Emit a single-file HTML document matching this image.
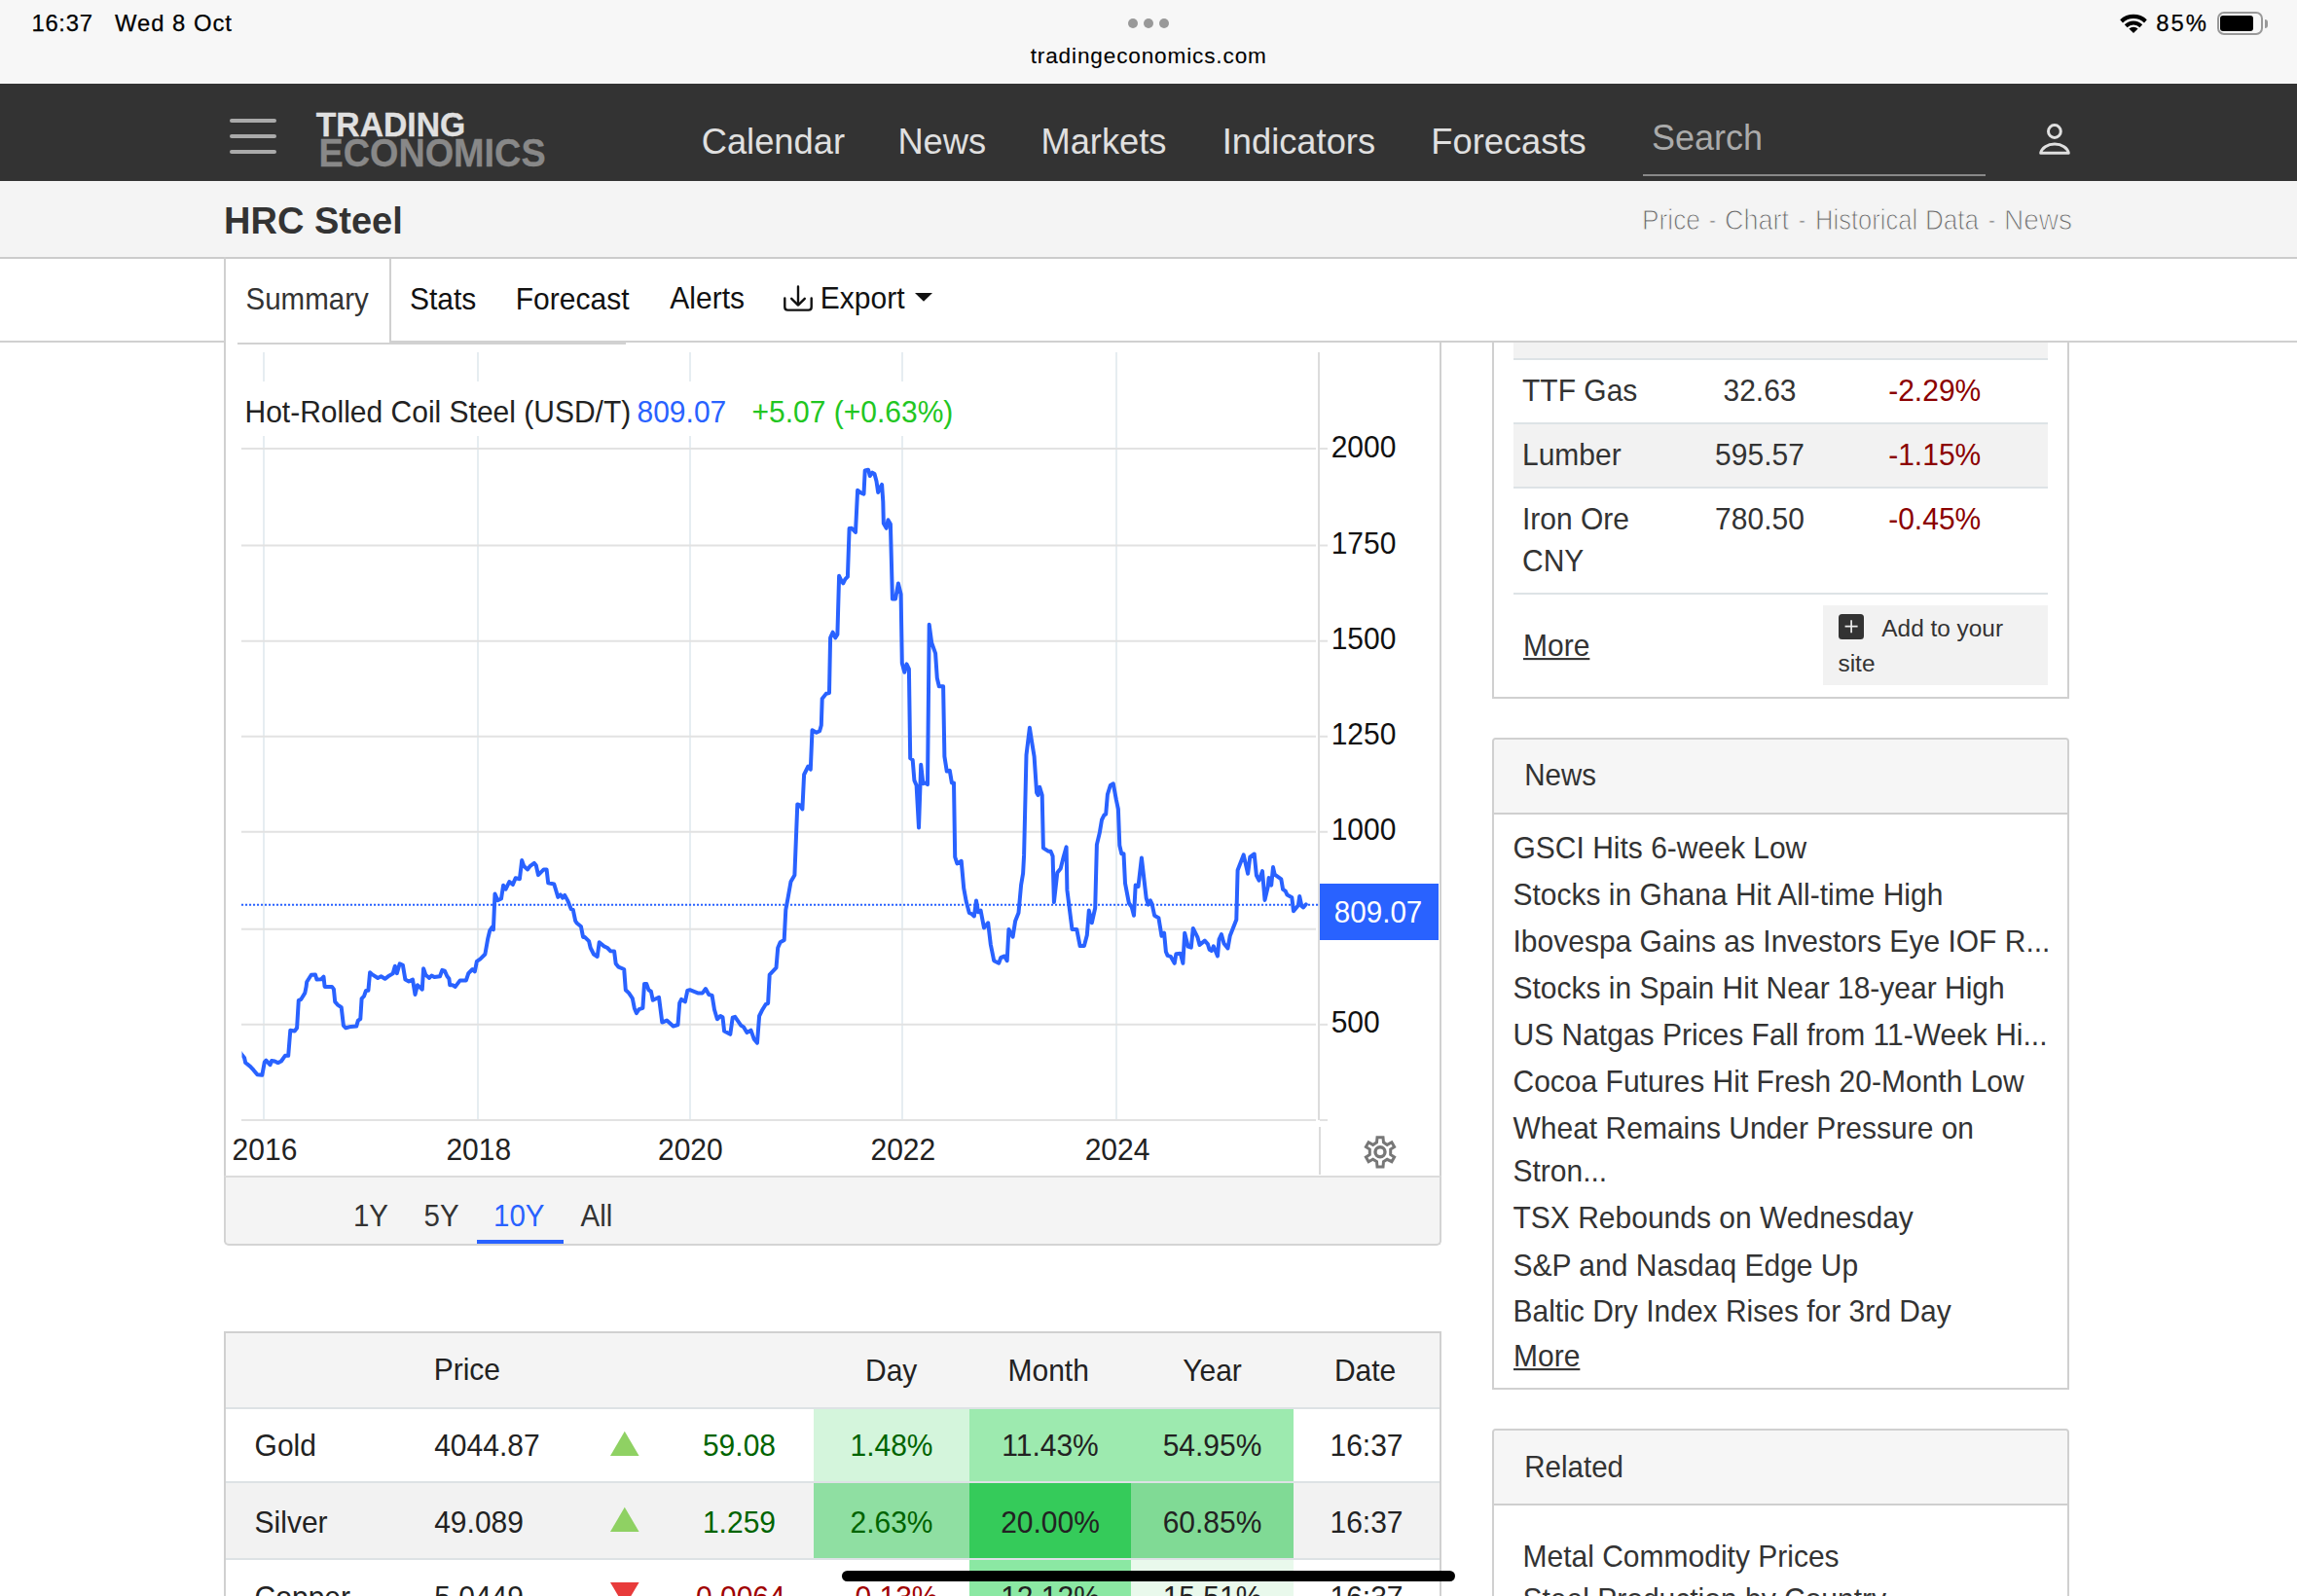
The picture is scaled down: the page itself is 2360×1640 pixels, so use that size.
<!DOCTYPE html>
<html><head><meta charset="utf-8"><title>HRC Steel</title>
<style>
html,body{margin:0;padding:0;}
body{width:2360px;height:1640px;overflow:hidden;position:relative;background:#fff;font-family:"Liberation Sans", sans-serif;}
.t{position:absolute;white-space:pre;font-family:"Liberation Sans", sans-serif;}
.r{position:absolute;}
.sy{transform:scaleY(1.04);transform-origin:0 85%;}
</style></head><body>
<div class="r" style="left:0px;top:0px;width:2360px;height:86px;background:#f7f7f7;"></div>
<div class="t" style="left:32.4px;top:11.9px;font-size:23.8px;line-height:23.8px;color:#000;-webkit-text-stroke:0.25px #000;letter-spacing:0.75px;">16:37</div>
<div class="t" style="left:118.0px;top:11.9px;font-size:23.8px;line-height:23.8px;color:#000;-webkit-text-stroke:0.25px #000;letter-spacing:1.0px;">Wed 8 Oct</div>
<div class="r" style="left:1159px;top:19px;width:10px;height:10px;border-radius:5px;background:#999"></div>
<div class="r" style="left:1175px;top:19px;width:10px;height:10px;border-radius:5px;background:#999"></div>
<div class="r" style="left:1191px;top:19px;width:10px;height:10px;border-radius:5px;background:#999"></div>
<div class="t" style="left:1058.7px;top:46.6px;font-size:22.6px;line-height:22.6px;color:#000;-webkit-text-stroke:0.1px #000;letter-spacing:0.85px;">tradingeconomics.com</div>
<div class="t" style="left:2215.3px;top:11.8px;font-size:23.8px;line-height:23.8px;color:#000;-webkit-text-stroke:0.25px #000;letter-spacing:2px;">85%</div>
<svg class="r" style="left:2176px;top:12px" width="32" height="24" viewBox="2176 12 32 24">
<path d="M2178.2 20.2 A20 20 0 0 1 2205.8 20.2 L2203 23.4 A16 16 0 0 0 2181 23.4 Z" fill="#000"/>
<path d="M2182.8 25.2 A13 13 0 0 1 2201.2 25.2 L2198.4 28.2 A9 9 0 0 0 2185.6 28.2 Z" fill="#000"/>
<path d="M2192 34 L2187.4 29.6 A6.5 6.5 0 0 1 2196.6 29.6 Z" fill="#000"/>
</svg>
<div class="r" style="left:2277.5px;top:12px;width:43px;height:20px;border:2px solid #999;border-radius:7px"></div>
<div class="r" style="left:2281px;top:16px;width:34px;height:16px;background:#000;border-radius:3px"></div>
<div class="r" style="left:2327px;top:19.5px;width:3px;height:9px;background:#999;border-radius:0 3px 3px 0"></div>
<div class="r" style="left:0px;top:86px;width:2360px;height:100px;background:#333333;"></div>
<div class="r" style="left:236px;top:122px;width:48px;height:4px;border-radius:2px;background:#aaa"></div>
<div class="r" style="left:236px;top:138px;width:48px;height:4px;border-radius:2px;background:#aaa"></div>
<div class="r" style="left:236px;top:154px;width:48px;height:4px;border-radius:2px;background:#aaa"></div>
<div class="t" style="left:324.8px;top:112.2px;font-size:33.7px;line-height:33.7px;color:#e0e0e0;font-weight:700;transform:scaleY(1.04);transform-origin:0 85%;-webkit-text-stroke:0.3px #e0e0e0;">TRADING</div>
<div class="t" style="left:327.5px;top:140.2px;font-size:37.8px;line-height:37.8px;color:#888;font-weight:700;transform:scaleY(1.07);transform-origin:0 85%;-webkit-text-stroke:0.3px #888;">ECONOMICS</div>
<div class="t" style="left:720.7px;top:128.1px;font-size:36.3px;line-height:36.3px;color:#e0e0e0;">Calendar</div>
<div class="t" style="left:922.4px;top:128.1px;font-size:36.3px;line-height:36.3px;color:#e0e0e0;">News</div>
<div class="t" style="left:1069.4px;top:128.1px;font-size:36.3px;line-height:36.3px;color:#e0e0e0;">Markets</div>
<div class="t" style="left:1255.7px;top:128.1px;font-size:36.3px;line-height:36.3px;color:#e0e0e0;">Indicators</div>
<div class="t" style="left:1470.3px;top:128.1px;font-size:36.3px;line-height:36.3px;color:#e0e0e0;">Forecasts</div>
<div class="t" style="left:1697.0px;top:124.0px;font-size:36px;line-height:36px;color:#aaa;">Search</div>
<div class="r" style="left:1688px;top:178.5px;width:352px;height:2px;background:#888;"></div>
<svg class="r" style="left:2090px;top:122px" width="42" height="42" viewBox="2090 122 42 42">
<circle cx="2110.9" cy="135" r="6.4" fill="none" stroke="#e0e0e0" stroke-width="3"/>
<path d="M2096.7 157.3 A14.4 10.5 0 0 1 2125.3 157.3 Z" fill="none" stroke="#e0e0e0" stroke-width="3" stroke-linejoin="round"/>
</svg>
<div class="r" style="left:0px;top:186px;width:2360px;height:78px;background:#f4f4f4;"></div>
<div class="r" style="left:0px;top:264px;width:2360px;height:2px;background:#cccccc;"></div>
<div class="t" style="left:230.1px;top:207.7px;font-size:38px;line-height:38px;color:#333;font-weight:700;">HRC Steel</div>
<div class="t" style="left:1686.5px;top:211.3px;font-size:30px;line-height:30px;color:#6a6a6a;-webkit-text-stroke:1px #f4f4f4;transform:scaleX(0.877);transform-origin:0 0;">Price</div>
<div class="t" style="left:1756.2px;top:211.3px;font-size:30px;line-height:30px;color:#6a6a6a;-webkit-text-stroke:1px #f4f4f4;transform:scaleX(0.7);transform-origin:0 0;">-</div>
<div class="t" style="left:1771.8px;top:211.3px;font-size:30px;line-height:30px;color:#6a6a6a;-webkit-text-stroke:1px #f4f4f4;transform:scaleX(0.899);transform-origin:0 0;">Chart</div>
<div class="t" style="left:1847.6px;top:211.3px;font-size:30px;line-height:30px;color:#6a6a6a;-webkit-text-stroke:1px #f4f4f4;transform:scaleX(0.7);transform-origin:0 0;">-</div>
<div class="t" style="left:1864.6px;top:211.3px;font-size:30px;line-height:30px;color:#6a6a6a;-webkit-text-stroke:1px #f4f4f4;transform:scaleX(0.852);transform-origin:0 0;">Historical</div>
<div class="t" style="left:1977.7px;top:211.3px;font-size:30px;line-height:30px;color:#6a6a6a;-webkit-text-stroke:1px #f4f4f4;transform:scaleX(0.869);transform-origin:0 0;">Data</div>
<div class="t" style="left:2043.1px;top:211.3px;font-size:30px;line-height:30px;color:#6a6a6a;-webkit-text-stroke:1px #f4f4f4;transform:scaleX(0.7);transform-origin:0 0;">-</div>
<div class="t" style="left:2059.4px;top:211.3px;font-size:30px;line-height:30px;color:#6a6a6a;-webkit-text-stroke:1px #f4f4f4;transform:scaleX(0.935);transform-origin:0 0;">News</div>
<div class="r" style="left:0px;top:266px;width:2360px;height:84px;background:#ffffff;"></div>
<div class="r" style="left:0px;top:350px;width:2360px;height:2px;background:#d0d0d0;"></div>
<div class="r" style="left:230px;top:264px;width:2px;height:88px;background:#d0d0d0;"></div>
<div class="r" style="left:400px;top:266px;width:2px;height:86px;background:#d0d0d0;"></div>
<div class="r" style="left:232px;top:350px;width:168px;height:2px;background:#ffffff;"></div>
<div class="r" style="left:244px;top:352px;width:399px;height:2px;background:#d2d2d2;"></div>
<div class="t sy" style="left:252.5px;top:292.9px;font-size:29.5px;line-height:29.5px;color:#333;">Summary</div>
<div class="t sy" style="left:421.0px;top:292.5px;font-size:30px;line-height:30px;color:#111;">Stats</div>
<div class="t sy" style="left:529.8px;top:292.5px;font-size:30px;line-height:30px;color:#111;">Forecast</div>
<div class="t sy" style="left:688.3px;top:292.3px;font-size:30px;line-height:30px;color:#111;">Alerts</div>
<div class="t sy" style="left:842.8px;top:292.3px;font-size:30px;line-height:30px;color:#111;">Export</div>
<svg class="r" style="left:800px;top:290px" width="40" height="34" viewBox="800 290 40 34">
<path d="M820 294.5 V313.5 M813.2 306.8 L820 313.6 L826.8 306.8" fill="none" stroke="#111" stroke-width="2.4" stroke-linecap="round" stroke-linejoin="round"/>
<path d="M806.3 306.5 V315.5 Q806.3 318.6 809.4 318.6 H830.6 Q833.7 318.6 833.7 315.5 V306.5" fill="none" stroke="#111" stroke-width="2.4" stroke-linecap="round"/>
</svg>
<svg class="r" style="left:938px;top:299px" width="22" height="13" viewBox="938 299 22 13"><path d="M940 301 H958 L949 309.8 Z" fill="#111"/></svg>
<div class="r" style="left:230px;top:352px;width:2px;height:924px;background:#d0d0d0;"></div>
<div class="r" style="left:1479px;top:352px;width:2px;height:924px;background:#d0d0d0;"></div>
<div class="r" style="left:230px;top:1208px;width:1251px;height:72px;background:#f4f4f4;border:2px solid #d4d4d4;border-top:2px solid #dcdcdc;box-sizing:border-box;border-radius:0 0 5px 5px"></div>
<svg class="r" style="left:232px;top:352px" width="1247" height="855" viewBox="232 352 1247 855">
<line x1="271" y1="362" x2="271" y2="1151" stroke="#e6edf1" stroke-width="2"/>
<line x1="491" y1="362" x2="491" y2="1151" stroke="#e6edf1" stroke-width="2"/>
<line x1="709" y1="362" x2="709" y2="1151" stroke="#e6edf1" stroke-width="2"/>
<line x1="927" y1="362" x2="927" y2="1151" stroke="#e6edf1" stroke-width="2"/>
<line x1="1147" y1="362" x2="1147" y2="1151" stroke="#e6edf1" stroke-width="2"/>
<line x1="248" y1="461" x2="1352" y2="461" stroke="#e2e2e2" stroke-width="2"/>
<line x1="1356" y1="461" x2="1364" y2="461" stroke="#e2e2e2" stroke-width="2"/>
<line x1="248" y1="560.5" x2="1352" y2="560.5" stroke="#e2e2e2" stroke-width="2"/>
<line x1="1356" y1="560.5" x2="1364" y2="560.5" stroke="#e2e2e2" stroke-width="2"/>
<line x1="248" y1="658.7" x2="1352" y2="658.7" stroke="#e2e2e2" stroke-width="2"/>
<line x1="1356" y1="658.7" x2="1364" y2="658.7" stroke="#e2e2e2" stroke-width="2"/>
<line x1="248" y1="756.8" x2="1352" y2="756.8" stroke="#e2e2e2" stroke-width="2"/>
<line x1="1356" y1="756.8" x2="1364" y2="756.8" stroke="#e2e2e2" stroke-width="2"/>
<line x1="248" y1="854.8" x2="1352" y2="854.8" stroke="#e2e2e2" stroke-width="2"/>
<line x1="1356" y1="854.8" x2="1364" y2="854.8" stroke="#e2e2e2" stroke-width="2"/>
<line x1="248" y1="954.8" x2="1352" y2="954.8" stroke="#e2e2e2" stroke-width="2"/>
<line x1="1356" y1="954.8" x2="1364" y2="954.8" stroke="#e2e2e2" stroke-width="2"/>
<line x1="248" y1="1052.8" x2="1352" y2="1052.8" stroke="#e2e2e2" stroke-width="2"/>
<line x1="1356" y1="1052.8" x2="1364" y2="1052.8" stroke="#e2e2e2" stroke-width="2"/>
<line x1="248" y1="1151" x2="1352" y2="1151" stroke="#e2e2e2" stroke-width="2"/>
<line x1="1356" y1="1151" x2="1364" y2="1151" stroke="#e2e2e2" stroke-width="2"/>
<line x1="1355" y1="362" x2="1355" y2="1151" stroke="#dcdcdc" stroke-width="2"/>
<line x1="1356" y1="1158" x2="1356" y2="1208" stroke="#dcdcdc" stroke-width="2"/>
<rect x="240" y="392" width="760" height="56" fill="#fff"/>
<line x1="248" y1="929.7" x2="1355" y2="929.7" stroke="#2962ff" stroke-width="2" stroke-dasharray="2.1 1.9"/>
<defs><clipPath id="pc"><rect x="248.5" y="360" width="1110" height="790"/></clipPath></defs>
<path d="M246 1080.5 L248.5 1083.8 L251.1 1087.0 L252.2 1092.0 L257.1 1095.8 L260.4 1099.4 L264.4 1104.3 L269.3 1104.8 L271.8 1091.3 L273.4 1089.6 L277.5 1094.2 L279.1 1090.0 L282.3 1090.5 L285.6 1092.1 L288.9 1090.5 L292.9 1084.8 L296.2 1084.8 L298.3 1058.7 L302.7 1059.5 L305.1 1056.3 L306.8 1027.8 L309.2 1027.0 L313.3 1020.4 L314.6 1013.9 L315.2 1009.0 L319.8 1001.7 L323.9 1001.4 L325.5 1006.6 L329.9 1006.3 L332.5 1003.6 L333.6 1013.9 L341.0 1013.9 L342.9 1016.4 L344.2 1029.4 L346.7 1032.3 L350.7 1035.1 L352.9 1053.8 L355.3 1056.3 L360.5 1054.9 L366.2 1054.6 L367.9 1048.6 L370.3 1047.0 L371.6 1026.1 L374.0 1023.7 L376.0 1018.0 L378.4 1017.7 L380.1 999.2 L382.5 1001.4 L388.2 1005.0 L391.5 1003.3 L395.5 1005.8 L398.8 1003.3 L403.7 1000.4 L405.8 992.7 L407.8 1000.1 L410.7 990.3 L413.9 991.9 L416.4 1006.6 L420.0 1008.5 L424.0 1006.6 L426.5 1022.0 L428.9 1012.3 L433.8 1016.7 L435.1 995.2 L437.3 1001.7 L441.1 1005.0 L443.4 1002.5 L446.3 1004.1 L452.0 1003.3 L454.4 996.8 L456.9 997.6 L459.3 1003.0 L461.4 1005.8 L462.2 1012.3 L465.0 1012.3 L467.8 1013.9 L472.7 1007.4 L478.9 1007.4 L481.3 1000.1 L485.4 996.0 L487.8 998.4 L489.9 987.8 L493.5 985.4 L498.4 980.5 L501.3 964.2 L503.3 956.1 L505.7 952.5 L506.9 955.3 L508.5 918.6 L511.4 925.1 L515.0 923.5 L517.1 909.7 L519.6 913.7 L523.3 906.1 L526.9 908.9 L529.7 902.3 L533.9 903.2 L536.2 884.1 L538.3 890.1 L542.1 893.4 L544.8 889.8 L548.9 886.9 L550.8 889.3 L553.0 899.1 L558.7 893.4 L561.6 893.4 L563.2 907.2 L569.3 908.5 L573.3 921.9 L575.8 919.4 L578.2 922.7 L580.2 919.9 L583.1 925.1 L586.7 934.1 L588.8 934.9 L591.2 946.3 L592.9 948.8 L596.9 952.0 L599.1 962.9 L601.0 963.1 L605.1 967.2 L606.7 974.0 L610.0 980.5 L613.7 983.0 L615.7 968.3 L620.6 972.4 L624.1 974.0 L627.3 977.3 L631.1 977.6 L632.7 990.3 L635.5 993.6 L641.2 996.0 L642.8 1017.2 L646.1 1020.4 L649.8 1025.8 L651.8 1035.9 L653.9 1041.1 L656.6 1037.2 L660.4 1035.9 L662.0 1011.1 L664.3 1011.1 L666.4 1017.2 L668.9 1018.8 L670.8 1027.8 L677.0 1024.8 L680.3 1050.6 L685.1 1048.6 L691.7 1054.6 L696.5 1053.0 L698.2 1030.7 L700.1 1026.9 L703.9 1029.4 L706.3 1018.0 L708.8 1017.2 L716.9 1020.4 L721.8 1020.4 L725.0 1016.0 L728.3 1022.0 L731.6 1022.9 L734.0 1037.5 L736.9 1047.3 L740.2 1044.0 L742.5 1045.3 L744.1 1059.5 L750.3 1062.8 L752.7 1045.7 L755.2 1044.9 L761.4 1053.8 L764.1 1055.4 L767.4 1061.1 L771.5 1058.7 L774.7 1067.7 L778.0 1071.7 L780.1 1044.0 L782.9 1038.3 L786.9 1031.8 L789.1 1031.0 L790.7 1001.7 L797.5 994.4 L799.2 974.0 L801.6 968.3 L805.7 965.9 L807.3 934.9 L809.7 921.9 L812.5 906.0 L816.4 899.2 L819.3 826.4 L821.8 827.3 L824.4 831.5 L826.1 796.0 L830.3 787.5 L832.8 790.6 L834.5 750.3 L838.8 752.8 L842.1 751.2 L843.8 745.2 L844.7 717.9 L848.9 712.8 L852.0 712.0 L853.1 655.3 L855.7 649.7 L858.2 655.3 L860.4 651.9 L862.1 591.8 L864.1 596.1 L866.3 599.4 L868.4 595.2 L870.9 592.7 L872.6 543.1 L875.1 542.8 L879.0 547.0 L881.1 503.8 L884.4 506.4 L887.5 507.6 L888.7 483.5 L892.1 482.7 L893.8 489.0 L896.3 485.6 L898.5 486.9 L900.5 494.5 L902.2 505.9 L904.2 501.3 L906.1 497.9 L907.3 515.7 L907.8 537.7 L910.7 542.8 L912.4 534.3 L914.9 538.5 L916.9 615.5 L920.0 615.5 L922.9 599.4 L925.6 610.4 L926.8 681.5 L929.3 690.8 L931.5 682.4 L933.9 687.4 L935.2 779.1 L937.7 780.8 L939.4 801.9 L941.6 807.0 L944.0 850.5 L946.2 785.8 L948.4 805.3 L950.4 804.4 L953.0 806.1 L954.7 641.7 L957.2 660.4 L961.1 671.4 L962.8 696.7 L964.8 705.2 L969.1 705.2 L970.4 777.4 L972.8 792.6 L975.8 791.8 L977.9 804.4 L980.0 804.4 L981.2 880.6 L983.4 887.4 L987.7 884.8 L990.2 912.7 L992.7 926.3 L995.8 938.1 L998.2 939.0 L1000.9 941.5 L1003.0 925.4 L1005.1 937.3 L1007.6 935.6 L1011.0 953.4 L1015.2 948.3 L1017.8 970.3 L1021.2 987.2 L1026.2 989.7 L1028.4 983.8 L1032.1 982.5 L1034.7 987.2 L1036.4 955.0 L1040.6 962.7 L1043.1 946.6 L1046.5 938.1 L1049.1 909.4 L1051.1 897.5 L1052.1 878.9 L1054.5 775.7 L1057.9 747.8 L1060.1 762.1 L1062.6 777.4 L1065.1 814.6 L1066.5 817.1 L1068.2 808.7 L1070.7 817.1 L1071.9 871.3 L1077.0 874.7 L1079.5 874.7 L1081.6 879.7 L1082.9 927.1 L1086.3 896.7 L1089.7 892.4 L1092.7 880.6 L1095.6 870.4 L1096.4 914.4 L1101.5 955.0 L1106.3 955.0 L1109.6 972.0 L1113.9 972.0 L1116.8 961.0 L1118.8 935.6 L1121.8 948.3 L1125.2 933.0 L1126.9 867.9 L1129.9 855.2 L1132.0 842.5 L1134.5 837.4 L1136.2 836.6 L1137.9 816.3 L1140.8 807.0 L1143.8 805.3 L1146.9 822.2 L1148.9 831.5 L1150.3 868.7 L1152.3 877.2 L1154.5 877.2 L1156.0 907.7 L1159.9 928.0 L1162.8 932.2 L1165.0 940.7 L1166.7 909.4 L1169.5 911.0 L1172.9 881.4 L1177.7 922.9 L1179.7 929.7 L1181.9 925.4 L1183.6 928.8 L1186.1 940.7 L1190.4 943.2 L1193.5 961.8 L1196.1 958.7 L1197.9 978.0 L1199.6 981.9 L1202.7 982.8 L1206.7 989.8 L1208.4 980.2 L1212.8 979.7 L1215.4 989.8 L1217.2 958.7 L1220.7 972.7 L1223.8 973.6 L1225.8 953.9 L1230.4 963.1 L1232.5 971.0 L1237.8 966.6 L1240.9 970.1 L1242.6 975.8 L1244.8 977.1 L1246.8 972.3 L1251.0 982.4 L1252.5 965.3 L1254.9 960.0 L1257.5 969.6 L1261.5 974.5 L1263.7 961.8 L1270.3 945.1 L1271.6 894.2 L1277.7 878.4 L1282.1 897.7 L1284.3 880.6 L1288.7 877.5 L1290.9 899.5 L1293.5 904.7 L1297.0 895.1 L1299.5 924.9 L1302.7 911.3 L1303.6 902.1 L1306.2 909.6 L1308.0 891.1 L1309.7 898.6 L1316.3 903.4 L1318.1 913.9 L1320.7 915.7 L1322.5 919.6 L1327.3 922.3 L1329.0 936.3 L1333.9 930.2 L1335.2 921.0 L1337.4 931.1 L1339.1 932.4 L1341.8 929.3" fill="none" stroke="#2962ff" stroke-width="4" stroke-linejoin="round" stroke-linecap="round" clip-path="url(#pc)"/>
<rect x="1356" y="908" width="122" height="58" fill="#2962ff"/>
<path d="M1415.0 1168.7 L1421.0 1168.7 L1421.5 1173.8 L1425.2 1176.4 L1429.9 1173.8 L1432.6 1178.6 L1428.7 1181.0 L1428.7 1186.5 L1432.6 1188.9 L1429.9 1193.7 L1425.2 1191.3 L1421.5 1193.7 L1421.0 1199.1 L1415.0 1199.1 L1414.5 1193.7 L1410.6 1191.3 L1406.1 1193.7 L1403.4 1188.9 L1407.3 1186.5 L1407.3 1181.0 L1403.4 1178.6 L1406.1 1173.8 L1410.6 1176.4 L1414.5 1173.8 Z" fill="none" stroke="#777" stroke-width="3" stroke-linejoin="miter"/>
<circle cx="1418" cy="1183.75" r="5" fill="none" stroke="#777" stroke-width="3.4"/>
</svg>
<div class="t sy" style="left:251.5px;top:408.8px;font-size:30px;line-height:30px;color:#222;">Hot-Rolled Coil Steel (USD/T)</div>
<div class="t sy" style="left:654.5px;top:408.8px;font-size:30px;line-height:30px;color:#2962ff;">809.07</div>
<div class="t sy" style="left:772.5px;top:408.8px;font-size:30px;line-height:30px;color:#22c622;">+5.07 (+0.63%)</div>
<div class="t sy" style="left:1367.7px;top:444.5px;font-size:30px;line-height:30px;color:#111;">2000</div>
<div class="t sy" style="left:1367.7px;top:544.0px;font-size:30px;line-height:30px;color:#111;">1750</div>
<div class="t sy" style="left:1367.7px;top:642.2px;font-size:30px;line-height:30px;color:#111;">1500</div>
<div class="t sy" style="left:1367.7px;top:740.3px;font-size:30px;line-height:30px;color:#111;">1250</div>
<div class="t sy" style="left:1367.7px;top:838.3px;font-size:30px;line-height:30px;color:#111;">1000</div>
<div class="t sy" style="left:1367.7px;top:1036.3px;font-size:30px;line-height:30px;color:#111;">500</div>
<div class="t sy" style="left:1370.8px;top:922.6px;font-size:29.6px;line-height:29.6px;color:#ffffff;">809.07</div>
<div class="t sy" style="left:238.6px;top:1166.5px;font-size:30px;line-height:30px;color:#222;">2016</div>
<div class="t sy" style="left:458.4px;top:1166.5px;font-size:30px;line-height:30px;color:#222;">2018</div>
<div class="t sy" style="left:676.0px;top:1166.5px;font-size:30px;line-height:30px;color:#222;">2020</div>
<div class="t sy" style="left:894.5px;top:1166.5px;font-size:30px;line-height:30px;color:#222;">2022</div>
<div class="t sy" style="left:1114.7px;top:1166.5px;font-size:30px;line-height:30px;color:#222;">2024</div>
<div class="t sy" style="left:362.9px;top:1234.6px;font-size:29.5px;line-height:29.5px;color:#333;">1Y</div>
<div class="t sy" style="left:435.5px;top:1234.6px;font-size:29.5px;line-height:29.5px;color:#333;">5Y</div>
<div class="t sy" style="left:507.0px;top:1234.6px;font-size:29.5px;line-height:29.5px;color:#2962ff;">10Y</div>
<div class="t sy" style="left:596.5px;top:1234.6px;font-size:29.5px;line-height:29.5px;color:#333;">All</div>
<div class="r" style="left:490px;top:1274px;width:89px;height:4px;background:#2962ff;"></div>
<div class="r" style="left:230px;top:1368px;width:1251px;height:300px;border:2px solid #d0d0d0;border-bottom:none;box-sizing:border-box"></div>
<div class="r" style="left:232px;top:1370px;width:1247px;height:76px;background:#f4f4f4;"></div>
<div class="r" style="left:232px;top:1446px;width:1247px;height:2px;background:#dde2e5;"></div>
<div class="r" style="left:232px;top:1524px;width:1247px;height:78px;background:#f2f2f2;"></div>
<div class="r" style="left:232px;top:1522px;width:1247px;height:2px;background:#dde2e5;"></div>
<div class="r" style="left:232px;top:1601px;width:1247px;height:2px;background:#dde2e5;"></div>
<div class="r" style="left:836px;top:1448px;width:160px;height:74px;background:#d4f5dc;"></div>
<div class="r" style="left:996px;top:1448px;width:166px;height:74px;background:#9deaaf;"></div>
<div class="r" style="left:1162px;top:1448px;width:167px;height:74px;background:#9deaaf;"></div>
<div class="r" style="left:836px;top:1524px;width:160px;height:77px;background:#8fdfa2;"></div>
<div class="r" style="left:996px;top:1524px;width:166px;height:77px;background:#35cb5a;"></div>
<div class="r" style="left:1162px;top:1524px;width:167px;height:77px;background:#80da95;"></div>
<div class="r" style="left:996px;top:1603px;width:166px;height:40px;background:#8be8a3;"></div>
<div class="r" style="left:1162px;top:1603px;width:167px;height:40px;background:#e9f9ec;"></div>
<div class="t sy" style="left:445.7px;top:1393.3px;font-size:30px;line-height:30px;color:#222;">Price</div>
<div class="t sy" style="left:889.0px;top:1393.7px;font-size:30px;line-height:30px;color:#222;">Day</div>
<div class="t sy" style="left:1035.5px;top:1393.7px;font-size:30px;line-height:30px;color:#222;">Month</div>
<div class="t sy" style="left:1215.2px;top:1393.7px;font-size:30px;line-height:30px;color:#222;">Year</div>
<div class="t sy" style="left:1370.9px;top:1393.7px;font-size:30px;line-height:30px;color:#222;">Date</div>
<div class="t sy" style="left:261.6px;top:1471.3px;font-size:30px;line-height:30px;color:#222;">Gold</div>
<div class="t sy" style="left:446.2px;top:1471.3px;font-size:30px;line-height:30px;color:#222;">4044.87</div>
<svg class="r" style="left:626px;top:1469.8px" width="32" height="27" viewBox="0 0 32 27"><path d="M1 26 L15.8 0.7 L30.6 26 Z" fill="#8fd163"/></svg>
<div class="t sy" style="left:640px;top:1471.3px;width:157px;text-align:right;font-size:30px;line-height:30px;color:#006400">59.08</div>
<div class="t sy" style="left:836px;top:1471.3px;width:160px;text-align:center;font-size:30px;line-height:30px;color:#006400">1.48%</div>
<div class="t sy" style="left:996px;top:1471.3px;width:166px;text-align:center;font-size:30px;line-height:30px;color:#222">11.43%</div>
<div class="t sy" style="left:1162px;top:1471.3px;width:167px;text-align:center;font-size:30px;line-height:30px;color:#222">54.95%</div>
<div class="t sy" style="left:1329px;top:1471.3px;width:150px;text-align:center;font-size:30px;line-height:30px;color:#222">16:37</div>
<div class="t sy" style="left:261.6px;top:1549.5px;font-size:30px;line-height:30px;color:#222;">Silver</div>
<div class="t sy" style="left:446.2px;top:1549.5px;font-size:30px;line-height:30px;color:#222;">49.089</div>
<svg class="r" style="left:626px;top:1548px" width="32" height="27" viewBox="0 0 32 27"><path d="M1 26 L15.8 0.7 L30.6 26 Z" fill="#8fd163"/></svg>
<div class="t sy" style="left:640px;top:1549.5px;width:157px;text-align:right;font-size:30px;line-height:30px;color:#006400">1.259</div>
<div class="t sy" style="left:836px;top:1549.5px;width:160px;text-align:center;font-size:30px;line-height:30px;color:#006400">2.63%</div>
<div class="t sy" style="left:996px;top:1549.5px;width:166px;text-align:center;font-size:30px;line-height:30px;color:#222">20.00%</div>
<div class="t sy" style="left:1162px;top:1549.5px;width:167px;text-align:center;font-size:30px;line-height:30px;color:#222">60.85%</div>
<div class="t sy" style="left:1329px;top:1549.5px;width:150px;text-align:center;font-size:30px;line-height:30px;color:#222">16:37</div>
<div class="t sy" style="left:261.6px;top:1626.5px;font-size:30px;line-height:30px;color:#222;">Copper</div>
<div class="t sy" style="left:446.2px;top:1626.5px;font-size:30px;line-height:30px;color:#222;">5.0449</div>
<svg class="r" style="left:626px;top:1625.4px" width="32" height="27" viewBox="0 0 32 27"><path d="M1 1 L15.8 26 L30.6 1 Z" fill="#e83b3b"/></svg>
<div class="t sy" style="left:640px;top:1626.5px;width:166.7px;text-align:right;font-size:30px;line-height:30px;color:#a00000">-0.0064</div>
<div class="t sy" style="left:836px;top:1626.5px;width:160px;text-align:center;font-size:30px;line-height:30px;color:#a00000">-0.13%</div>
<div class="t sy" style="left:996px;top:1626.5px;width:166px;text-align:center;font-size:30px;line-height:30px;color:#222">12.12%</div>
<div class="t sy" style="left:1162px;top:1626.5px;width:167px;text-align:center;font-size:30px;line-height:30px;color:#222">15.51%</div>
<div class="t sy" style="left:1329px;top:1626.5px;width:150px;text-align:center;font-size:30px;line-height:30px;color:#222">16:37</div>
<div class="r" style="left:865px;top:1613.5px;width:630px;height:11.5px;border-radius:6px;background:#000"></div>
<div class="r" style="left:1533px;top:352px;width:593px;height:366px;border:2px solid #d0d0d0;border-top:none;box-sizing:border-box"></div>
<div class="r" style="left:1555px;top:352px;width:549px;height:16px;background:#f2f2f2;"></div>
<div class="r" style="left:1555px;top:368px;width:549px;height:2px;background:#dde3e6;"></div>
<div class="r" style="left:1555px;top:434px;width:549px;height:2px;background:#dde3e6;"></div>
<div class="r" style="left:1555px;top:436px;width:549px;height:64px;background:#f2f2f2;"></div>
<div class="r" style="left:1555px;top:500px;width:549px;height:2px;background:#dde3e6;"></div>
<div class="r" style="left:1555px;top:609px;width:549px;height:2px;background:#dde3e6;"></div>
<div class="t sy" style="left:1564.0px;top:386.8px;font-size:30px;line-height:30px;color:#333;">TTF Gas</div>
<div class="t sy" style="left:1700px;top:386.8px;width:216px;text-align:center;font-size:30px;line-height:30px;color:#333">32.63</div>
<div class="t sy" style="left:1940.2px;top:386.8px;font-size:30px;line-height:30px;color:#8b0000;">-2.29%</div>
<div class="t sy" style="left:1564.0px;top:453.0px;font-size:30px;line-height:30px;color:#333;">Lumber</div>
<div class="t sy" style="left:1700px;top:453.0px;width:216px;text-align:center;font-size:30px;line-height:30px;color:#333">595.57</div>
<div class="t sy" style="left:1940.2px;top:453.0px;font-size:30px;line-height:30px;color:#8b0000;">-1.15%</div>
<div class="t sy" style="left:1564.0px;top:519.1px;font-size:30px;line-height:30px;color:#333;">Iron Ore</div>
<div class="t sy" style="left:1700px;top:519.1px;width:216px;text-align:center;font-size:30px;line-height:30px;color:#333">780.50</div>
<div class="t sy" style="left:1940.2px;top:519.1px;font-size:30px;line-height:30px;color:#8b0000;">-0.45%</div>
<div class="t sy" style="left:1564.0px;top:562.3px;font-size:30px;line-height:30px;color:#333;">CNY</div>
<div class="t sy" style="left:1565.0px;top:649.0px;font-size:30px;line-height:30px;color:#333;text-decoration:underline;text-underline-offset:2px;text-decoration-thickness:2px;">More</div>
<div class="r" style="left:1873px;top:622px;width:231px;height:82px;background:#f2f2f2;"></div>
<div class="r" style="left:1889px;top:631px;width:26px;height:26px;border-radius:3.5px;background:#333"></div>
<svg class="r" style="left:1889px;top:631px" width="26" height="26" viewBox="0 0 26 26"><path d="M13.1 6.2 V19.2 M6.6 12.7 H19.6" stroke="#eee" stroke-width="1.7"/></svg>
<div class="t" style="left:1933.3px;top:633.7px;font-size:24.4px;line-height:24.4px;color:#333;">Add to your</div>
<div class="t" style="left:1888.5px;top:670.3px;font-size:24.4px;line-height:24.4px;color:#333;">site</div>
<div class="r" style="left:1533px;top:758px;width:593px;height:670px;border:2px solid #d0d0d0;box-sizing:border-box;border-radius:4px 4px 0 0"></div>
<div class="r" style="left:1535px;top:760px;width:589px;height:76px;background:#f6f6f6;border-radius:3px 3px 0 0"></div>
<div class="r" style="left:1535px;top:835px;width:589px;height:2px;background:#cfcfcf;"></div>
<div class="t sy" style="left:1566.3px;top:782.4px;font-size:29.5px;line-height:29.5px;color:#333;">News</div>
<div class="t sy" style="left:1554.5px;top:857.2px;font-size:30px;line-height:30px;color:#333;">GSCI Hits 6-week Low</div>
<div class="t sy" style="left:1554.5px;top:905.2px;font-size:30px;line-height:30px;color:#333;">Stocks in Ghana Hit All-time High</div>
<div class="t sy" style="left:1554.5px;top:953.0px;font-size:30px;line-height:30px;color:#333;">Ibovespa Gains as Investors Eye IOF R...</div>
<div class="t sy" style="left:1554.5px;top:1001.1px;font-size:30px;line-height:30px;color:#333;">Stocks in Spain Hit Near 18-year High</div>
<div class="t sy" style="left:1554.5px;top:1048.8px;font-size:30px;line-height:30px;color:#333;">US Natgas Prices Fall from 11-Week Hi...</div>
<div class="t sy" style="left:1554.5px;top:1097.3px;font-size:30px;line-height:30px;color:#333;">Cocoa Futures Hit Fresh 20-Month Low</div>
<div class="t sy" style="left:1554.5px;top:1145.1px;font-size:30px;line-height:30px;color:#333;">Wheat Remains Under Pressure on</div>
<div class="t sy" style="left:1554.5px;top:1189.1px;font-size:30px;line-height:30px;color:#333;">Stron...</div>
<div class="t sy" style="left:1554.5px;top:1236.9px;font-size:30px;line-height:30px;color:#333;">TSX Rebounds on Wednesday</div>
<div class="t sy" style="left:1554.5px;top:1285.5px;font-size:30px;line-height:30px;color:#333;">S&amp;P and Nasdaq Edge Up</div>
<div class="t sy" style="left:1554.5px;top:1333.2px;font-size:30px;line-height:30px;color:#333;">Baltic Dry Index Rises for 3rd Day</div>
<div class="t sy" style="left:1555.0px;top:1379.1px;font-size:30px;line-height:30px;color:#333;text-decoration:underline;text-underline-offset:2px;text-decoration-thickness:2px;">More</div>
<div class="r" style="left:1533px;top:1468px;width:593px;height:200px;border:2px solid #d0d0d0;box-sizing:border-box;border-radius:4px 4px 0 0"></div>
<div class="r" style="left:1535px;top:1470px;width:589px;height:76px;background:#f6f6f6;border-radius:3px 3px 0 0"></div>
<div class="r" style="left:1535px;top:1545px;width:589px;height:2px;background:#cfcfcf;"></div>
<div class="t sy" style="left:1566.3px;top:1493.4px;font-size:29.5px;line-height:29.5px;color:#333;">Related</div>
<div class="t sy" style="left:1564.5px;top:1584.8px;font-size:30px;line-height:30px;color:#333;">Metal Commodity Prices</div>
<div class="t sy" style="left:1564.5px;top:1628.5px;font-size:30px;line-height:30px;color:#333;">Steel Production by Country</div>
</body></html>
